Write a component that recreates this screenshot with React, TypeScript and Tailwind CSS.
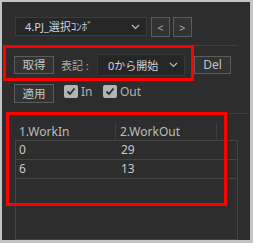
import React from "react";

const font = { fontFamily: '"Noto Sans", "Noto Sans CJK JP", sans-serif' };

function Chevron({ className = "" }: { className?: string }) {
  return (
    <svg width="9" height="6" viewBox="0 0 9 6" className={className}>
      <path d="M1 1 L4.5 4.5 L8 1" stroke="#bdbdbd" strokeWidth="1.2" fill="none" />
    </svg>
  );
}

function Check() {
  return (
    <span className="flex h-[13px] w-[14px] items-center justify-center rounded-[2px] bg-[#b4b4b4]">
      <svg width="10" height="9" viewBox="0 0 10 9">
        <path d="M1.5 4.5 L4 7 L8.5 1.5" stroke="#2b2b2b" strokeWidth="1.8" fill="none" />
      </svg>
    </span>
  );
}

export default function App() {
  return (
    <div
      className="h-[243px] w-[253px] bg-[#c4c4c4] pb-[3px] pl-[2px] pr-[3px] pt-[2px] text-[12px] leading-none text-[#c4c4c4]"
      style={font}
    >
      <div className="relative flex h-full w-full flex-col overflow-hidden bg-[#2d2d2d]">
        {/* Row 1 */}
        <div className="flex pl-[13px] pt-[15px]">
          <div className="flex h-[19px] w-[132px] items-center justify-between border border-[#3c3c3c] bg-[#262626] pl-[9px] pr-[6px]">
            <span className="text-[11px] text-[#c9d4e0]">4.PJ_選択ｺﾝﾎﾞ</span>
            <Chevron />
          </div>
          <div className="ml-[4px] flex h-[20px] w-[19px] items-center justify-center border border-[#5c5c5c] bg-[#333333] text-[11px] text-[#a8a8a8]">
            &lt;
          </div>
          <div className="ml-[3px] flex h-[20px] w-[19px] items-center justify-center border border-[#5c5c5c] bg-[#333333] text-[11px] text-[#a8b4c0]">
            &gt;
          </div>
        </div>
        {/* group line */}
        <div className="ml-[6px] mt-[8px] h-px w-[230px] bg-[#3d3d3d]" />
        {/* Row 2 */}
        <div className="mt-[8px] flex items-center pl-[12px]">
          <div className="flex h-[18px] w-[40px] items-center justify-center border border-[#5c5c5c] bg-[#333333] text-[11.5px] text-[#c4c4c4]">
            取得
          </div>
          <span className="ml-[7px] w-[36px] text-[11px] text-[#a8a8a8]">表記 :</span>
          <div className="flex h-[22px] w-[88px] items-center justify-between border border-[#363636] bg-[#262626] pl-[10px] pr-[6px]">
            <span className="text-[11px] text-[#d4d4d4]">0から開始</span>
            <Chevron />
          </div>
          <div className="ml-[9px] flex h-[18px] w-[37px] items-center justify-center border border-[#5c5c5c] bg-[#333333] text-[12px] text-[#c4c4c4]">
            Del
          </div>
        </div>
        {/* Row 3 */}
        <div className="mt-[8px] flex items-start pl-[12px]">
          <div className="flex h-[19px] w-[40px] items-center justify-center border border-[#5c5c5c] bg-[#333333] text-[11.5px] text-[#c4c4c4]">
            適用
          </div>
          <div className="ml-[10px] mt-[1px] flex w-[39px] items-center">
            <Check />
            <span className="ml-[3px] text-[12px] text-[#b4b4b4]">In</span>
          </div>
          <div className="mt-[1px] flex items-center">
            <Check />
            <span className="ml-[3px] text-[12px] text-[#b4b4b4]">Out</span>
          </div>
        </div>
        {/* group line 2 */}
        <div className="ml-[4px] mt-[10px] h-px w-[242px] bg-[#3d3d3d]" />
        {/* Table header */}
        <div className="ml-[13px] mt-[9px] flex h-[17px] w-[222px] items-center text-[12px] text-[#bcbcbc]">
          <div className="flex h-full w-[101px] items-center border-r border-[#3e3e3e] pl-[4px]">1.WorkIn</div>
          <div className="flex h-full w-[101px] items-center border-r border-[#3e3e3e] pl-[4px]">2.WorkOut</div>
        </div>
        {/* Table body */}
        <div className="ml-[13px] flex w-[223px] flex-1 flex-col border border-[#444444] text-[12px] text-[#c8c8c8]">
          <div className="flex h-[19px] items-center border-b border-[#444444]">
            <span className="w-[101px] pl-[3px]">0</span>
            <span className="pl-[4px]">29</span>
          </div>
          <div className="flex h-[19px] items-center border-b border-[#444444]">
            <span className="w-[101px] pl-[3px]">6</span>
            <span className="pl-[4px]">13</span>
          </div>
        </div>
        {/* Red annotation boxes */}
        <div className="absolute left-[1px] top-[43px] h-[36px] w-[191px] border-[3px] border-[#ff0000]" />
        <div className="absolute left-[4px] top-[110px] h-[94px] w-[221px] border-[3px] border-[#ff0000]" />
      </div>
    </div>
  );
}
